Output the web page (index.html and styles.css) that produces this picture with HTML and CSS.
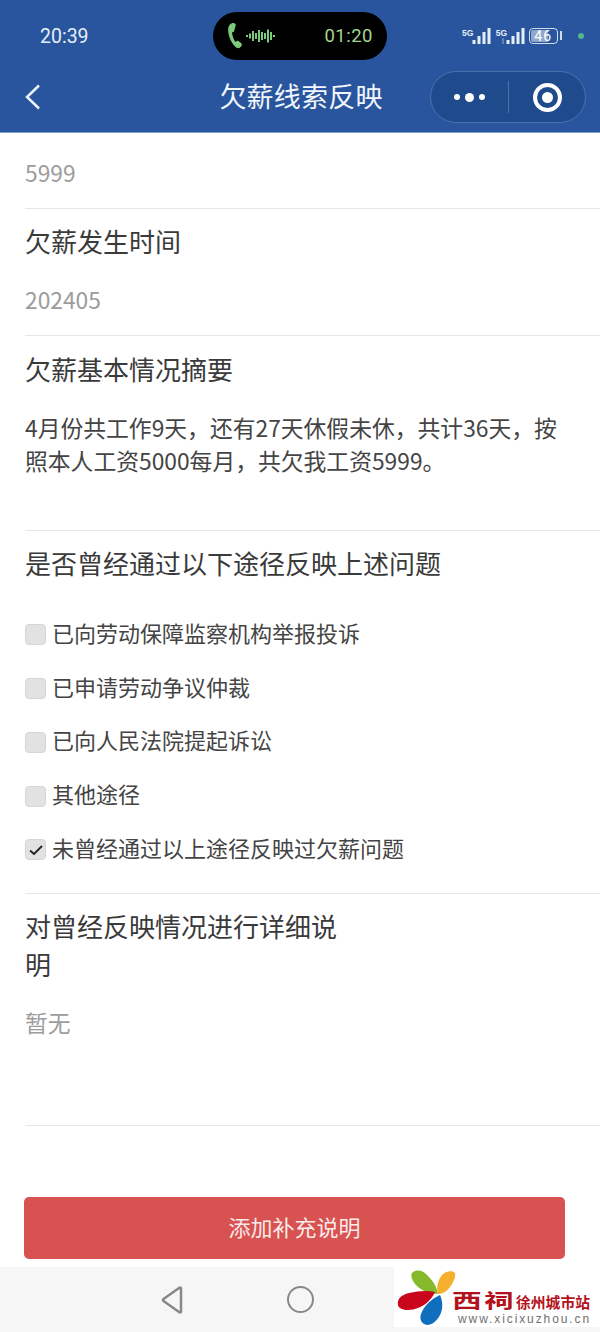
FILE: index.html
```html
<!DOCTYPE html>
<html lang="zh-CN">
<head>
    <meta charset="UTF-8">
    <meta name="viewport" content="width=device-width, initial-scale=1.0">
    <title>欠薪线索反映</title>
    <link rel="stylesheet" href="styles.css">
</head>
<body>
    <div id="container">
        <header class="header">
            <div class="status-bar">
                <span class="clock">20:39</span>
                <div class="call-pill">
                    <svg class="call-icon" width="52" height="30" viewBox="0 0 52 30">
                        <path class="phone" d="M3 3.500C1.500 5 1 7 1.200 10c.4 6 3.600 13 8 16.500 1.500 1 3.500.8 4.500-.5l1-1.500c.4-.8.2-1.600-.5-2.200l-2.700-2.300c-.7-.5-1.500-.4-2.100.2l-.8.8c-2-2.500-3.200-6-3.600-9.500l1.200-.4c.9-.3 1.300-1.100 1.200-2L8.800 4C8.600 2.800 7.600 2 6.500 2 5.200 2 4 2.500 3 3.500z"/>
                        <path class="wave" d="M20 14v2M23 12.500v5M26 10v10M29 12v6M32 9v12M35 11v8M38 12v6M41 8.500v13M44 11v8M47 14v2"/>
                    </svg>
                    <span class="call-time">01:20</span>
                </div>
                <div class="status-icons">
                    <span class="signal"><span class="net">5G</span>
                        <svg width="19" height="16" viewBox="0 0 19 16"><path d="M2 12v4M7 8v8M12 4v12M17 0v16"/></svg>
                    </span>
                    <span class="signal"><span class="net">5G</span>
                        <svg width="19" height="16" viewBox="0 0 19 16"><path class="sim-mark" d="M-3 10v6"/><path d="M2 12v4M7 8v8M12 4v12M17 0v16"/></svg>
                    </span>
                    <span class="battery">46</span>
                    <span class="battery-cap"></span>
                    <span class="dot-green"></span>
                </div>
            </div>
            <div class="nav-bar">
                <svg class="back" width="16" height="26" viewBox="0 0 16 26"><path d="M14 1.500L2 13l12 11.500"/></svg>
                <h1 class="page-title">欠薪线索反映</h1>
                <div class="capsule">
                    <div class="capsule-more"><i></i><i class="big"></i><i></i></div>
                    <div class="capsule-line"></div>
                    <div class="capsule-close"><i></i></div>
                </div>
            </div>
        </header>

        <main class="form">
            <section class="field field-first">
                <p class="value">5999</p>
            </section>
            <section class="field field-date">
                <h2 class="label">欠薪发生时间</h2>
                <p class="value">202405</p>
            </section>
            <section class="field field-summary">
                <h2 class="label">欠薪基本情况摘要</h2>
                <p class="summary">4月份共工作9天，还有27天休假未休，共计36天，按照本人工资5000每月，共欠我工资5999。</p>
            </section>
            <section class="field field-checks">
                <h2 class="label">是否曾经通过以下途径反映上述问题</h2>
                <ul class="check-list">
                    <li class="check-item"><span class="box"></span>已向劳动保障监察机构举报投诉</li>
                    <li class="check-item"><span class="box"></span>已申请劳动争议仲裁</li>
                    <li class="check-item"><span class="box"></span>已向人民法院提起诉讼</li>
                    <li class="check-item"><span class="box"></span>其他途径</li>
                    <li class="check-item"><span class="box"><svg width="16" height="12" viewBox="0 0 16 12"><path d="M2 6.500l4 3.500 8-8"/></svg></span>未曾经通过以上途径反映过欠薪问题</li>
                </ul>
            </section>
            <section class="field field-detail">
                <h2 class="label label-narrow">对曾经反映情况进行详细说明</h2>
                <p class="value">暂无</p>
            </section>
            <div class="actions">
                <button class="add-btn" type="button"><span>添加补充说明</span></button>
            </div>
        </main>

        <footer class="system-nav">
            <svg class="sys-back" width="26" height="28" viewBox="0 0 26 28"><path d="M21 2.500v23a1 1 0 0 1-1.600.8L3.500 15a1.200 1.200 0 0 1 0-2L19.400 1.700a1 1 0 0 1 1.600.8z"/></svg>
            <span class="sys-home"></span>
            <div class="watermark">
                <svg class="petals" width="64" height="60" viewBox="0 0 64 60">
                    <path fill="#86b82c" d="M19 5c5-3 11-1 15 4 5 5 9 11 10 18-8 0-16-3-21-8-4-4-8-11-4-14z"/>
                    <path fill="#f5b02e" d="M44 27c-2-7 0-15 5-20 3-3 10-4 12-1 1 4-2 10-5 14-3 4-7 7-12 7z"/>
                    <path fill="#c9061c" d="M4 38c-1-6 3-10 11-12 9-2 18-3 26-1-3 7-9 13-17 16-7 3-19 3-20-3z"/>
                    <path fill="#0f6fbe" d="M46 28c3 7 3 14 0 20-3 6-8 10-13 10-5-1-8-5-6-11 3-8 10-15 19-19z"/>
                </svg>
                <div class="mark-text">
                    <div class="mark-name"><span class="mark-big">西祠</span><span class="mark-small">徐州城市站</span></div>
                    <div class="mark-url">www.xicixuzhou.cn</div>
                </div>
            </div>
        </footer>
    </div>
</body>
</html>
```

FILE: styles.css
```css
* {
    box-sizing: border-box;
}
body {
    margin: 0;
    background-color: #fff;
    font-family: "Noto Sans CJK SC", "Noto Sans", sans-serif;
    color: #3a3a3a;
}
#container {
    width: 600px;
    height: 1332px;
    overflow: hidden;
    position: relative;
    display: flex;
    flex-direction: column;
}
h1, h2, p, ul {
    margin: 0;
    padding: 0;
    font-weight: 400;
}

/* header */
.header {
    height: 133px;
    background-color: #28559d;
    border-bottom: 1px solid #7f9fcb;
    color: #fff;
}
.status-bar {
    height: 66px;
    padding-top: 12px;
    display: grid;
    grid-template-columns: 213px 174px 1fr;
    align-items: start;
}
.clock {
    margin: 12px 0 0 40px;
    font-family: Roboto, sans-serif;
    font-size: 19.500px;
    line-height: 26px;
    color: #e4eef8;
}
.call-pill {
    height: 48px;
    padding: 0 14px;
    background-color: #000;
    border-radius: 24px;
    display: flex;
    align-items: center;
    justify-content: space-between;
}
.call-icon {
    margin-right: -4px;
}
.call-icon .phone {
    fill: #7ccb7c;
}
.call-icon .wave {
    fill: none;
    stroke: #7ccb7c;
    stroke-width: 2;
}
.call-time {
    font-family: Roboto, sans-serif;
    font-size: 18.500px;
    letter-spacing: .5px;
    color: #a5d68f;
}
.status-icons {
    margin: 15px 0 0 75px;
    display: flex;
    align-items: center;
    height: 17px;
}
.signal {
    display: flex;
    align-items: flex-end;
}
.signal + .signal {
    margin-left: 5px;
}
.signal svg {
    margin-left: -1.500px;
    overflow: visible;
    stroke: #e4eef8;
    stroke-width: 3;
    fill: none;
}
.signal svg .sim-mark {
    stroke: #6f93c9;
    stroke-width: 1.500;
}
.net {
    font-family: "Liberation Sans", sans-serif;
    font-size: 8.500px;
    font-weight: 700;
    line-height: 10px;
    color: #e4eef8;
    align-self: flex-start;
}
.battery {
    margin-left: 4px;
    width: 29px;
    height: 16px;
    border: 1.500px solid #cfdcec;
    border-radius: 4px;
    padding: 1px;
    background-image: linear-gradient(90deg, #8fa8ce 65%, transparent 65%);
    background-clip: content-box;
    font-family: Roboto, sans-serif;
    font-size: 14px;
    line-height: 13px;
    letter-spacing: 1px;
    text-align: center;
    color: #fff;
}
.battery-cap {
    width: 2px;
    height: 9px;
    margin-left: 2px;
    background-color: #cfdcec;
}
.dot-green {
    width: 6px;
    height: 6px;
    margin-left: 16px;
    border-radius: 50%;
    background-color: #55b68b;
}
.nav-bar {
    height: 66px;
    display: grid;
    grid-template-columns: 1fr auto 1fr;
    align-items: center;
    padding: 0 14px 6px 25px;
}
.back {
    margin-top: 2px;
}
.back path {
    fill: none;
    stroke: #eef3fa;
    stroke-width: 2.500;
}
.page-title {
    margin-left: -9px;
    font-size: 27px;
    line-height: 38px;
    letter-spacing: .2px;
    color: #f2f6fb;
    white-space: nowrap;
}
.capsule {
    width: 156px;
    height: 52px;
    margin-top: 2px;
    justify-self: end;
    display: flex;
    align-items: center;
    background-color: #1f4a8c;
    border: 1px solid #4b72ae;
    border-radius: 26px;
}
.capsule-more {
    width: 77px;
    display: flex;
    justify-content: center;
    align-items: center;
    gap: 5px;
}
.capsule-more i {
    width: 6px;
    height: 6px;
    border-radius: 50%;
    background-color: #fff;
}
.capsule-more i.big {
    width: 9px;
    height: 9px;
}
.capsule-line {
    width: 1px;
    height: 32px;
    background-color: #4b72ae;
}
.capsule-close {
    flex: 1;
    display: flex;
    justify-content: center;
}
.capsule-close i {
    width: 29px;
    height: 29px;
    border: 4px solid #fff;
    border-radius: 50%;
    display: flex;
    align-items: center;
    justify-content: center;
}
.capsule-close i::after {
    content: "";
    width: 11px;
    height: 11px;
    border-radius: 50%;
    background-color: #fff;
}

/* form */
.form {
    flex: 1;
    padding-left: 25px;
}
.field {
    border-bottom: 1px solid #e6e6e6;
}
.field-first {
    height: 76px;
    padding-top: 24px;
}
.field-date {
    height: 127px;
    padding-top: 13px;
}
.field-summary {
    height: 195px;
    padding-top: 14px;
}
.field-checks {
    height: 363px;
    padding-top: 13px;
}
.field-detail {
    height: 232px;
    padding-top: 13px;
}
.label {
    font-size: 26px;
    line-height: 38px;
    color: #3a3a3a;
}
.label-narrow {
    width: 320px;
}
.value {
    font-size: 22.800px;
    line-height: 32px;
    color: #9c9c9c;
}
.field-date .value {
    margin-top: 24px;
}
.field-detail .value {
    margin-top: 24px;
}
.summary {
    margin-top: 23px;
    padding-right: 30px;
    font-size: 22.800px;
    line-height: 33px;
    color: #444;
}
.check-list {
    list-style: none;
    margin-top: 23px;
}
.check-item {
    height: 53.750px;
    display: flex;
    align-items: center;
    gap: 6px;
    font-size: 22px;
    color: #444;
    white-space: nowrap;
}
.box {
    width: 21px;
    height: 21px;
    margin-top: 6px;
    flex: none;
    background-color: #e2e2e2;
    border: 1px solid #d6d6d6;
    border-radius: 4px;
    display: flex;
    align-items: center;
    justify-content: center;
}
.box path {
    fill: none;
    stroke: #222;
    stroke-width: 1.800;
}
.actions {
    padding-top: 71px;
}
.add-btn {
    display: block;
    width: 541px;
    height: 62px;
    margin-left: -1px;
    padding: 0 0 4px;
    border: none;
    border-radius: 5px;
    background-color: #d75250;
    color: #fbeaea;
    font-family: inherit;
    font-size: 22px;
}

/* bottom bar */
.system-nav {
    height: 65px;
    flex: none;
    background-color: #f6f6f6;
    display: flex;
    align-items: center;
    padding: 0 0 0 160px;
    gap: 101px;
}
.sys-back path {
    fill: none;
    stroke: #888;
    stroke-width: 2.500;
}
.sys-home {
    width: 27px;
    height: 27px;
    border: 2.500px solid #888;
    border-radius: 50%;
}
.watermark {
    position: absolute;
    right: 0;
    bottom: 5px;
    width: 206px;
    height: 60px;
    background-color: #fff;
    display: flex;
}
.petals {
    flex: none;
}
.mark-text {
    margin-left: -6px;
    padding-top: 21px;
    white-space: nowrap;
}
.mark-name {
    display: flex;
    align-items: center;
    height: 24px;
    color: #b3121c;
}
.mark-big {
    width: 64px;
    font-size: 27px;
    font-weight: 700;
    line-height: 24px;
    letter-spacing: 2px;
    transform: scale(1.1, .72);
    transform-origin: left center;
}
.mark-small {
    font-size: 14.800px;
    font-weight: 700;
    line-height: 20px;
    margin-top: 3px;
}
.mark-url {
    margin-left: 6px;
    font-family: "Liberation Sans", sans-serif;
    font-size: 12px;
    line-height: 14px;
    letter-spacing: 1.900px;
    color: #6f6f6f;
}
```
